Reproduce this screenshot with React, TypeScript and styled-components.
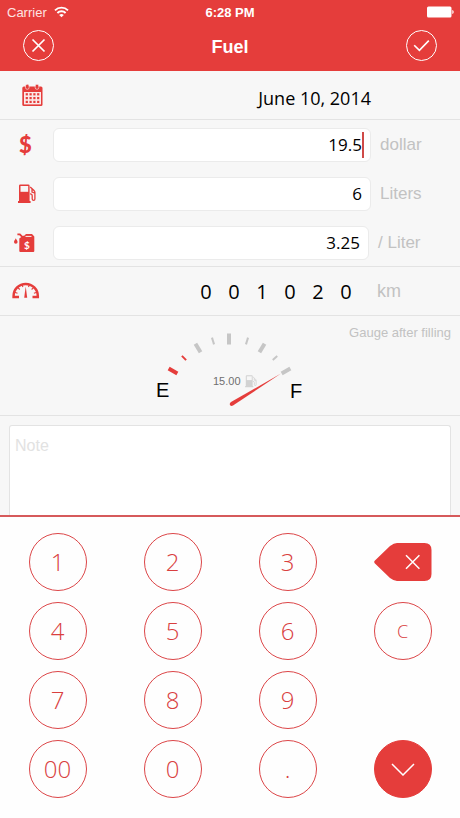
import React, { useState } from "react";
import styled, { createGlobalStyle, css } from "styled-components";

const red = "#e53d3b";
const line = "#e3e3e3";
const muted = "#c2c2c2";
const sans = `"Liberation Sans", Arial, sans-serif`;
const humanist = `"Open Sans", "Noto Sans", sans-serif`;

const GlobalStyle = createGlobalStyle`
  *, *::before, *::after { box-sizing: border-box; }
  body { margin: 0; background: #f7f7f7; font-family: ${sans}; }
  button, input, textarea { font: inherit; margin: 0; padding: 0; }
  button { cursor: pointer; }
  svg { display: block; }
`;

const Screen = styled.div`
  display: flex;
  flex-direction: column;
  min-height: 100vh;
`;

const Header = styled.header`
  background: ${red};
  color: #fff;
`;

const StatusBar = styled.div`
  display: grid;
  grid-template-columns: 1fr auto 1fr;
  align-items: center;
  height: 24px;
  padding: 0 6px;
  font-size: 13px;
`;

const Carrier = styled.div`
  display: flex;
  align-items: center;
  gap: 7px;
  padding-left: 1px;
  color: #fde4e3;
`;

const Clock = styled.time`
  font-weight: bold;
`;

const BatterySlot = styled.div`
  justify-self: end;
`;

const NavBar = styled.div`
  display: flex;
  align-items: flex-start;
  justify-content: space-between;
  height: 47px;
  padding: 6px 22px 0;
`;

const Title = styled.h1`
  margin: 0;
  font-size: 18px;
  line-height: 34px;
`;

const RoundButton = styled.button`
  width: 32px;
  height: 32px;
  border: 0;
  background: none;
  color: #fff;
`;

const Section = styled.section`
  box-shadow: inset 0 -1px ${line};
`;

const Row = styled.div<{ $indent: number }>`
  display: flex;
  align-items: center;
  height: 49px;
  padding-left: ${(p) => p.$indent}px;
`;

const DateText = styled.time`
  margin-left: auto;
  padding: 4px 89px 0 0;
  font-family: ${humanist};
  font-size: 18px;
  line-height: 24px;
`;

const IconSlot = styled.span<{ $width: number }>`
  flex: none;
  width: ${(p) => p.$width}px;
`;

const DollarSign = styled.span`
  display: block;
  color: ${red};
  font-family: Lato, "Open Sans", sans-serif;
  font-size: 22px;
  font-weight: 900;
  line-height: 24px;
`;

const Field = styled.div`
  position: relative;
  flex: 1;
  display: flex;
`;

const AmountInput = styled.input`
  width: 100%;
  min-width: 0;
  height: 34px;
  padding: 0 8px 1px;
  border: 1px solid #ebebeb;
  border-radius: 6px;
  background: #fff;
  color: #000;
  font-family: ${humanist};
  font-size: 17px;
  text-align: right;
  outline: none;
`;

const Caret = styled.span`
  position: absolute;
  top: 4px;
  right: 7px;
  width: 2px;
  height: 26px;
  background: #cf4a48;
`;

const Unit = styled.label<{ $wide?: boolean }>`
  flex: none;
  width: ${(p) => (p.$wide ? 91 : 89)}px;
  padding-left: 9px;
  color: ${muted};
  font-size: 17px;
`;

const Odometer = styled.div`
  display: flex;
  margin-left: auto;
  margin-right: 17px;
  font-family: ${humanist};
  font-size: 20px;
  line-height: 24px;
`;

const Digit = styled.span`
  width: 28px;
  text-align: center;
`;

const DistanceUnit = styled.span`
  width: 83px;
  color: ${muted};
  font-size: 18px;
`;

const GaugeSection = styled(Section)`
  display: grid;
  height: 100px;
`;

const GaugeCaption = styled.span`
  grid-area: 1 / 1;
  justify-self: end;
  padding: 9px 9px 0 0;
  color: ${muted};
  font-size: 13px;
  line-height: 15px;
`;

const GaugeDial = styled.svg`
  grid-area: 1 / 1;
  justify-self: center;
`;

const NoteSection = styled.section`
  display: flex;
  flex: 1;
  min-height: 90px;
  padding: 9px 9px 0;
`;

const NoteInput = styled.textarea`
  flex: 1;
  padding: 11px 5px;
  border: 1px solid ${line};
  border-bottom: 0;
  border-radius: 3px 3px 0 0;
  background: #fff;
  font-size: 16px;
  resize: none;
  outline: none;
  &::placeholder { color: #e2e2e2; }
`;

const Keypad = styled.div`
  display: grid;
  grid-template-columns: repeat(4, 1fr);
  grid-auto-rows: 58px;
  gap: 11px 0;
  justify-items: center;
  align-items: center;
  padding: 16px 0 20px;
  border-top: 2px solid #d65a5b;
  background: #fefefe;
`;

const Key = styled.button<{ $filled?: boolean; $small?: boolean }>`
  display: flex;
  align-items: center;
  justify-content: center;
  width: 58px;
  height: 58px;
  padding-bottom: 1px;
  border: 1px solid #dc4648;
  border-radius: 50%;
  background: transparent;
  color: #d9403f;
  font-family: ${humanist};
  font-size: ${(p) => (p.$small ? 18 : 24)}px;
  font-weight: 300;
  ${(p) => p.$filled && css`
    background: ${red};
    border-color: ${red};
    color: #fff;
  `}
`;

const DeleteKey = styled.button`
  width: 58px;
  height: 40px;
  border: 0;
  background: none;
`;

const WifiIcon = () => (
  <svg width="15" height="12" viewBox="0 0 15 12" fill="none" stroke="#fff" strokeWidth="1.9" aria-hidden="true">
    <path d="M1 4.3a9.2 9.2 0 0 1 13 0" />
    <path d="M3.4 7a5.8 5.8 0 0 1 8.2 0" />
    <path d="M7.5 11.3 5.2 9a3.3 3.3 0 0 1 4.6 0z" fill="#fff" stroke="none" />
  </svg>
);

const BatteryIcon = () => (
  <svg width="27" height="12" viewBox="0 0 27 12" fill="#fff" aria-hidden="true">
    <rect x="0" y="0.5" width="24.5" height="11" rx="1.5" />
    <path d="M25.3 4c1.8.6 1.8 3.4 0 4z" />
  </svg>
);

const CloseIcon = () => (
  <svg width="32" height="32" viewBox="0 0 32 32" fill="none" stroke="#fff" aria-hidden="true">
    <circle cx="16.5" cy="15.5" r="15" strokeWidth="1" />
    <path d="M10.5 9.5l12 12M22.5 9.5l-12 12" strokeWidth="1.7" />
  </svg>
);

const CheckIcon = () => (
  <svg width="32" height="32" viewBox="0 0 32 32" fill="none" stroke="#fff" aria-hidden="true">
    <circle cx="15.5" cy="15.5" r="15" strokeWidth="1" />
    <path d="M8.2 15.2l5.2 5.2 9.4-9.8" strokeWidth="1.6" />
  </svg>
);

const CalendarIcon = () => (
  <svg width="21" height="23" viewBox="0 0 21 23" aria-hidden="true">
    <rect x="0.3" y="2.5" width="20.2" height="19.5" rx="1.5" fill={red} />
    <rect x="2" y="8" width="17" height="12.4" fill="#fbe9e9" />
    {[3.7, 7.5, 11.3, 15.1].map((x) =>
      [9.2, 13, 16.8].map((y) => <rect key={`${x}-${y}`} x={x} y={y} width="2.2" height="2.2" fill={red} />)
    )}
    {[5.3, 15].map((x) => (
      <rect key={x} x={x - 1.8} y="0.3" width="3.6" height="5" rx="1.7" fill={red} stroke="#f7f7f7" strokeWidth="0.6" />
    ))}
  </svg>
);

const PumpShape = ({ color, hole }: { color: string; hole: string }) => (
  <>
    <path d="M1 1.8Q1 .5 2.3.5h8Q11.6.5 11.6 1.8V17h1v2H0v-2h1z" fill={color} />
    <rect x="2.5" y="2" width="7.7" height="5.8" fill={hole} />
    <path
      d="M12.2 3l3.8 3.5q.9.9.9 2V15q0 1.3-1.3 1.3T14.2 15v-3.2q0-2-2.2-2M14 5v3l2.6 1"
      fill="none"
      stroke={color}
      strokeWidth="1.3"
    />
  </>
);

const PumpIcon = () => (
  <svg width="18" height="20" viewBox="0 0 18 20" aria-hidden="true">
    <PumpShape color={red} hole="#f7f7f7" />
  </svg>
);

const CanIcon = () => (
  <svg width="21" height="20" viewBox="0 0 21 20" aria-hidden="true">
    <path d="M5.3 5.5L9 2.8h1.2L12 1h6l2.3 2.6V18q0 1-1 1H6.3q-1 0-1-1z" fill={red} />
    <path d="M11.5 3.4h6" stroke="#f7f7f7" strokeWidth="1" />
    <path d="M3.4 1.4h2.4l3 3" fill="none" stroke={red} strokeWidth="1.9" />
    <path d="M1.8 5.3C2.6 7 3.6 8 3.6 9A1.8 1.8 0 0 1 0 9c0-1 1-2 1.8-3.7z" fill={red} />
    <text x="12.8" y="15.8" textAnchor="middle" fill="#fff" fontFamily="Lato, sans-serif" fontSize="10" fontWeight="bold">$</text>
  </svg>
);

const SpeedometerIcon = () => (
  <svg width="28" height="19" viewBox="0 0 28 19" fill="none" stroke={red} aria-hidden="true">
    <path d="M7 14.9H1.6V14a12.1 12.1 0 0 1 24.2 0v.9h-5.3" strokeWidth="2.5" />
    <path d="M2.5 10.3l3 .9M24.9 10.3l-3 .9M5.8 5.6l2 1.9M21.6 5.6l-2 1.9M10 2.8l.9 2.2M17.4 2.8l-.9 2.2" strokeWidth="1.1" />
    <path d="M13.7 4.5l1.5 11.3h-3z" fill={red} stroke="none" />
  </svg>
);

const BackspaceIcon = () => (
  <svg width="58" height="40" viewBox="0 0 58 40" aria-hidden="true">
    <path d="M.7 18.8L16 4Q20 1 23 1h27.5q7 0 7 7v24q0 7-7 7H23q-3 0-7-3L.7 21.2q-1-1.2 0-2.4z" fill={red} />
    <path d="M32 13.3l13.4 13.4M45.4 13.3L32 26.7" stroke="#fff" strokeWidth="1.5" />
  </svg>
);

const ChevronIcon = () => (
  <svg width="26" height="14" viewBox="0 0 26 14" fill="none" stroke="#fff" strokeWidth="1.5" aria-hidden="true">
    <path d="M2 2l11 11 11-11" />
  </svg>
);

const ticks = [
  { at: [43, 55], turn: -60, size: [4, 10], color: red },
  { at: [54, 42], turn: -45, size: [2, 6], color: red },
  { at: [68, 32], turn: -31, size: [4, 10], color: "#c6c6c6" },
  { at: [83, 25], turn: -17, size: [2, 7], color: "#c6c6c6" },
  { at: [99, 23], turn: 0, size: [4, 11], color: "#c6c6c6" },
  { at: [117, 25], turn: 17, size: [2, 7], color: "#c6c6c6" },
  { at: [132, 32], turn: 31, size: [4, 10], color: "#c6c6c6" },
  { at: [145, 42], turn: 48, size: [2, 6], color: "#c6c6c6" },
  { at: [156, 55], turn: 60, size: [4, 10], color: "#c6c6c6" },
];

const FuelGauge = () => (
  <GaugeDial width="200" height="98" viewBox="0 0 200 98" role="img" aria-label="Fuel gauge, full">
    {ticks.map(({ at: [x, y], turn, size: [w, h], color }) => (
      <rect key={x} x={x - w / 2} y={y - h / 2} width={w} height={h} fill={color} transform={`rotate(${turn} ${x} ${y})`} />
    ))}
    <g fontFamily="Liberation Sans, Arial, sans-serif">
      <text x="26" y="81" fontSize="20">E</text>
      <text x="160" y="82" fontSize="20">F</text>
      <text x="83" y="69" fontSize="11" fill="#6f6f6f">15.00</text>
    </g>
    <svg x="115" y="59" width="12" height="13" viewBox="0 0 18 20">
      <PumpShape color="#d2d2d2" hole="#f7f7f7" />
    </svg>
    <path d="M151 57.5L103 89.6q-2 1-3-.5-.8-1.800 1-3z" fill={red} />
  </GaugeDial>
);

type AmountKey = "cost" | "volume" | "price";

const amountRows: { id: AmountKey; icon: React.ReactNode; indent: number; unit: string; wide?: boolean }[] = [
  { id: "cost", icon: <DollarSign aria-hidden="true">$</DollarSign>, indent: 19, unit: "dollar" },
  { id: "volume", icon: <PumpIcon />, indent: 18, unit: "Liters" },
  { id: "price", icon: <CanIcon />, indent: 14, unit: "/ Liter", wide: true },
];

const digitKeys = [
  ["1", "2", "3"],
  ["4", "5", "6"],
  ["7", "8", "9"],
  ["00", "0", "."],
];

const fieldStart = 53;

export default function App() {
  const [amounts, setAmounts] = useState<Record<AmountKey, string>>({ cost: "19.5", volume: "6", price: "3.25" });
  const [active, setActive] = useState<AmountKey>("cost");
  const [note, setNote] = useState("");

  const update = (id: AmountKey, value: string) => setAmounts((prev) => ({ ...prev, [id]: value }));

  const sideKeys = [
    <DeleteKey key="delete" type="button" aria-label="Delete" onClick={() => update(active, amounts[active].slice(0, -1))}>
      <BackspaceIcon />
    </DeleteKey>,
    <Key key="clear" type="button" $small aria-label="Clear" onClick={() => update(active, "")}>C</Key>,
    <span key="blank" />,
    <Key key="hide" type="button" $filled aria-label="Hide keypad"><ChevronIcon /></Key>,
  ];

  return (
    <>
      <GlobalStyle />
      <Screen>
        <Header>
          <StatusBar>
            <Carrier>Carrier <WifiIcon /></Carrier>
            <Clock>6:28 PM</Clock>
            <BatterySlot><BatteryIcon /></BatterySlot>
          </StatusBar>
          <NavBar>
            <RoundButton type="button" aria-label="Cancel"><CloseIcon /></RoundButton>
            <Title>Fuel</Title>
            <RoundButton type="button" aria-label="Save"><CheckIcon /></RoundButton>
          </NavBar>
        </Header>

        <Section>
          <Row $indent={22}>
            <CalendarIcon />
            <DateText dateTime="2014-06-10">June 10, 2014</DateText>
          </Row>
        </Section>

        <Section>
          {amountRows.map(({ id, icon, indent, unit, wide }) => (
            <Row key={id} $indent={indent}>
              <IconSlot $width={fieldStart - indent}>{icon}</IconSlot>
              <Field>
                <AmountInput
                  id={id}
                  inputMode="decimal"
                  value={amounts[id]}
                  onFocus={() => setActive(id)}
                  onChange={(e) => update(id, e.target.value)}
                />
                {active === id && <Caret />}
              </Field>
              <Unit htmlFor={id} $wide={wide}>{unit}</Unit>
            </Row>
          ))}
        </Section>

        <Section>
          <Row $indent={12}>
            <SpeedometerIcon />
            <Odometer>
              {"001020".split("").map((digit, i) => <Digit key={i}>{digit}</Digit>)}
            </Odometer>
            <DistanceUnit>km</DistanceUnit>
          </Row>
        </Section>

        <GaugeSection>
          <FuelGauge />
          <GaugeCaption>Gauge after filling</GaugeCaption>
        </GaugeSection>

        <NoteSection>
          <NoteInput aria-label="Note" placeholder="Note" value={note} onChange={(e) => setNote(e.target.value)} />
        </NoteSection>

        <Keypad>
          {digitKeys.map((row, i) => (
            <React.Fragment key={i}>
              {row.map((label) => (
                <Key key={label} type="button" onClick={() => update(active, amounts[active] + label)}>{label}</Key>
              ))}
              {sideKeys[i]}
            </React.Fragment>
          ))}
        </Keypad>
      </Screen>
    </>
  );
}
